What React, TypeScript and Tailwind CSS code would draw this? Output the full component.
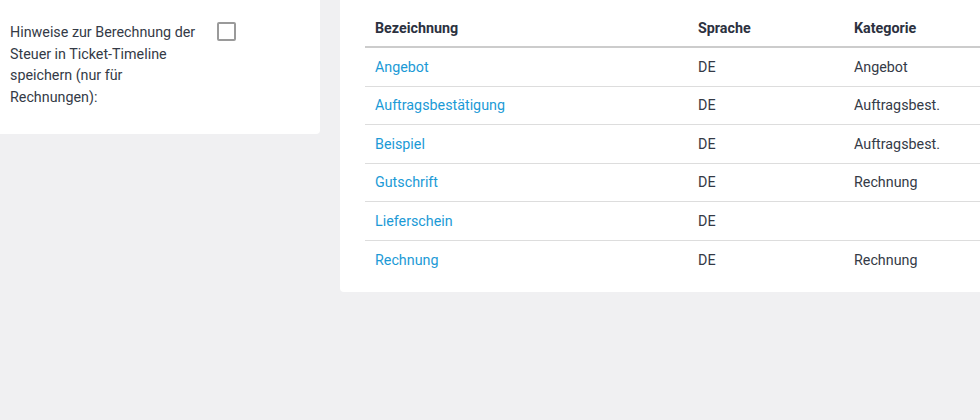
const rows = [
  { name: "Angebot", lang: "DE", category: "Angebot" },
  { name: "Auftragsbestätigung", lang: "DE", category: "Auftragsbest." },
  { name: "Beispiel", lang: "DE", category: "Auftragsbest." },
  { name: "Gutschrift", lang: "DE", category: "Rechnung" },
  { name: "Lieferschein", lang: "DE", category: "" },
  { name: "Rechnung", lang: "DE", category: "Rechnung" },
]

export default function App() {
  return (
    <div className="flex h-[420px] w-[980px] items-start gap-5 overflow-hidden bg-[#f0f0f2] font-['Roboto',sans-serif] text-[14.3px] text-[#343a46]">
      {/* settings card */}
      <div className="flex h-[134px] w-[320px] shrink-0 items-start gap-[7px] rounded-br bg-white pl-[10px] pt-[22px]">
        <label className="w-[200px] leading-[21.7px]">
          Hinweise zur Berechnung der Steuer in Ticket-Timeline speichern (nur für Rechnungen):
        </label>
        <input
          type="checkbox"
          className="h-[19px] w-[19px] appearance-none rounded-[2px] border-2 border-[#9a9a9a] bg-white"
        />
      </div>

      {/* templates table */}
      <div className="min-w-0 flex-1 rounded-bl bg-white pb-[13px] pl-[25px] pt-[10px]">
        <table className="w-[640px] border-separate border-spacing-0 text-left">
          <thead>
            <tr>
              <th className="w-[323px] border-b-2 border-[#cccccc] px-[10px] py-2 leading-5 font-bold text-[#2c3140]">
                Bezeichnung
              </th>
              <th className="w-[156px] border-b-2 border-[#cccccc] px-[10px] py-2 leading-5 font-bold text-[#2c3140]">
                Sprache
              </th>
              <th className="border-b-2 border-[#cccccc] px-[10px] py-2 leading-5 font-bold text-[#2c3140]">
                Kategorie
              </th>
            </tr>
          </thead>
          <tbody>
            {rows.map((r, i) => {
              const line = i < rows.length - 1 ? "border-b border-[#dddddd]" : ""
              return (
                <tr key={r.name}>
                  <td className={`h-[38.5px] px-[10px] leading-5 ${line}`}>
                    <a href="#" className="text-[#1b9ad6]">
                      {r.name}
                    </a>
                  </td>
                  <td className={`px-[10px] leading-5 ${line}`}>{r.lang}</td>
                  <td className={`px-[10px] leading-5 ${line}`}>{r.category}</td>
                </tr>
              )
            })}
          </tbody>
        </table>
      </div>
    </div>
  )
}
